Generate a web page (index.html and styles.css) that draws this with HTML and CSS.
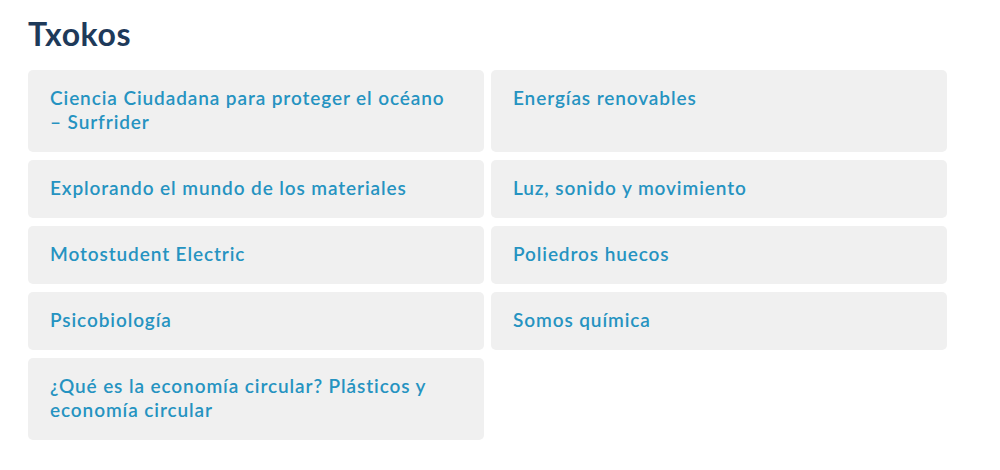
FILE: index.html
```html
<!DOCTYPE html>
<html lang="es">
<head>
    <meta charset="UTF-8">
    <meta name="viewport" content="width=device-width, initial-scale=1.0">
    <title>Txokos</title>
    <link rel="stylesheet" href="styles.css">
</head>
<body>
    <main class="txokos">
        <h1>Txokos</h1>
        <ul class="txoko-list">
            <li><a href="#">Ciencia Ciudadana para proteger el océano – Surfrider</a></li>
            <li><a href="#">Energías renovables</a></li>
            <li><a href="#">Explorando el mundo de los materiales</a></li>
            <li><a href="#">Luz, sonido y movimiento</a></li>
            <li><a href="#">Motostudent Electric</a></li>
            <li><a href="#">Poliedros huecos</a></li>
            <li><a href="#">Psicobiología</a></li>
            <li><a href="#">Somos química</a></li>
            <li><a href="#">¿Qué es la economía circular? Plásticos y economía circular</a></li>
        </ul>
    </main>
</body>
</html>
```

FILE: styles.css
```css
body {
    margin: 0;
    font-family: Lato, "Open Sans", sans-serif;
    background-color: #fff;
}

.txokos {
    width: 919px;
    padding: 15px 0 0 28px;
}

h1 {
    margin: 0 0 17px;
    font-size: 32px;
    line-height: 38px;
    font-weight: 700;
    letter-spacing: 0.6px;
    color: #1e3a5a;
}

.txoko-list {
    list-style: none;
    margin: 0;
    padding: 0;
    display: grid;
    grid-template-columns: 1fr 1fr;
    column-gap: 7px;
    row-gap: 8px;
}

.txoko-list li {
    background-color: #f0f0f0;
    border-radius: 5px;
    padding: 16px 22px 18px;
}

.txoko-list a {
    display: block;
    color: #2593c1;
    text-decoration: none;
    font-size: 19px;
    line-height: 24px;
    font-weight: 600;
    letter-spacing: 0.9px;
}
```
